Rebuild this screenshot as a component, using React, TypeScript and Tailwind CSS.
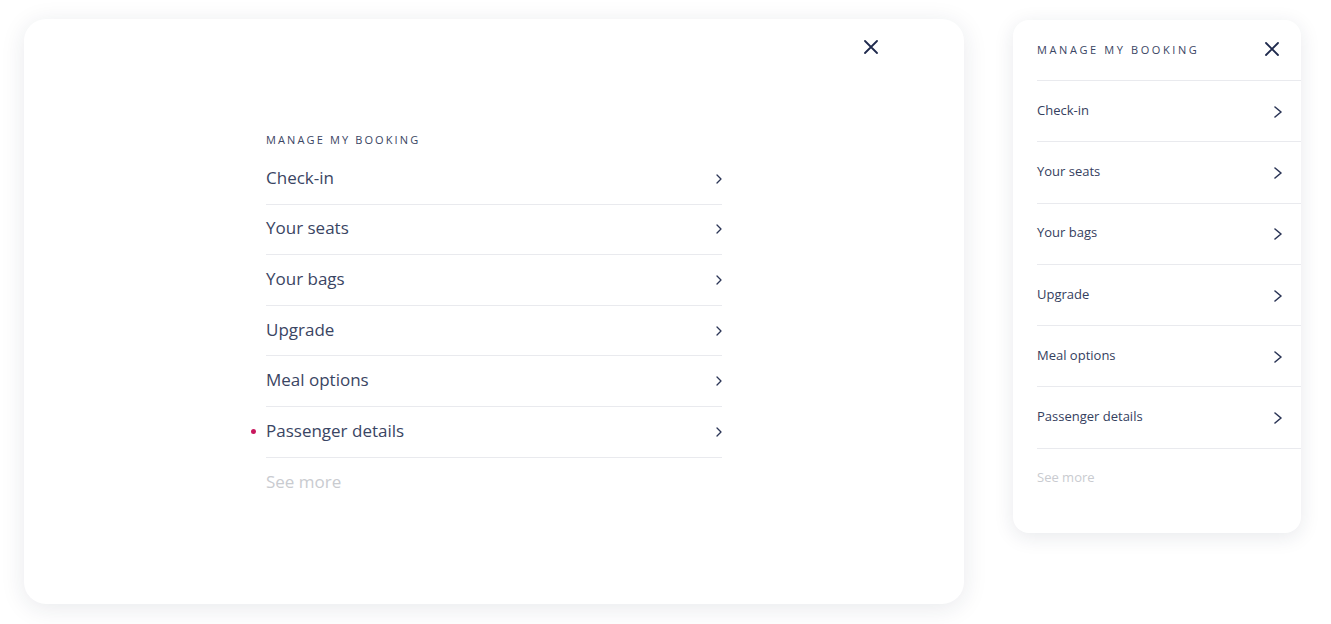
import React from "react";

const items = ["Check-in", "Your seats", "Your bags", "Upgrade", "Meal options", "Passenger details"];

function CloseIcon({ size = 14 }: { size?: number }) {
  return (
    <svg width={size} height={size} viewBox="0 0 14 14" fill="none">
      <path d="M1 1L13 13M13 1L1 13" stroke="#1f2a4d" strokeWidth="1.8" strokeLinecap="round" />
    </svg>
  );
}

function Chevron({ w, h, sw }: { w: number; h: number; sw: number }) {
  return (
    <svg width={w} height={h} viewBox={`0 0 ${w} ${h}`} fill="none">
      <path d={`M1 1L${w - 1} ${h / 2}L1 ${h - 1}`} stroke="#2b3556" strokeWidth={sw} strokeLinecap="round" strokeLinejoin="round" />
    </svg>
  );
}

export default function App() {
  return (
    <div className="min-h-screen w-full bg-white" style={{ fontFamily: '"Open Sans", "Noto Sans", sans-serif' }}>
      <div className="flex items-start pl-[24px] pt-[19px] gap-[49px]">
        {/* Left large card */}
        <div className="w-[940px] h-[585px] rounded-[22px] bg-white shadow-[0_4px_24px_rgba(30,40,70,0.10)] flex flex-col">
          <div className="flex justify-end pr-[86px] pt-[21px]">
            <CloseIcon />
          </div>
          <div className="ml-[242px] w-[456px] mt-[78px]">
            <div className="text-[11px] leading-[16px] tracking-[2.12px] text-[#3a4563] mb-[6px]">MANAGE MY BOOKING</div>
            {items.map((it) => (
              <div key={it} className="relative h-[50.6px] border-b border-[#e9eaee] flex items-center justify-between">
                {it === "Passenger details" && (
                  <span className="absolute left-[-15px] top-[22px] w-[5px] h-[5px] rounded-full bg-[#c8175d]" />
                )}
                <span className="text-[17px] leading-[24px] text-[#3a4563] mb-[2px]">{it}</span>
                <span className="mr-0">
                  <Chevron w={6} h={10} sw={1.3} />
                </span>
              </div>
            ))}
            <div className="h-[50px] flex items-center">
              <span className="text-[17px] leading-[24px] text-[#c9cbd0] mb-[2px]">See more</span>
            </div>
          </div>
        </div>

        {/* Right small card */}
        <div className="w-[288px] h-[513px] mt-[1px] rounded-[16px] bg-white shadow-[0_4px_20px_rgba(30,40,70,0.10)] flex flex-col">
          <div className="ml-[24px] h-[61px] border-b border-[#e9eaee] flex items-center justify-between pr-[22px]">
            <span className="text-[11px] leading-[16px] tracking-[2.6px] text-[#3a4563] mt-[-1px]">MANAGE MY BOOKING</span>
            <span className="mt-[-3px]">
              <CloseIcon />
            </span>
          </div>
          {items.map((it) => (
            <div key={it} className="ml-[24px] h-[61.3px] border-b border-[#e9eaee] flex items-center justify-between pr-[19px]">
              <span className="text-[13px] leading-[18px] font-medium text-[#35405e] mb-[3px]">{it}</span>
              <span className="mt-[1px]">
                <Chevron w={8} h={12} sw={1.6} />
              </span>
            </div>
          ))}
          <div className="ml-[24px] h-[60px] flex items-center">
            <span className="text-[13px] leading-[18px] font-medium text-[#c9cbd0] mb-[3px]">See more</span>
          </div>
        </div>
      </div>
    </div>
  );
}
